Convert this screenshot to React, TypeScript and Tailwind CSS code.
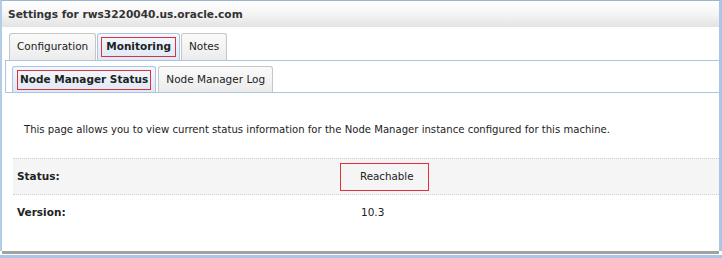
export default function App() {
  return (
    <div className="w-[722px] h-[258px] bg-white overflow-hidden flex flex-col text-[#222] font-['DejaVu_Sans',Verdana,sans-serif]">
      <div className="flex-1 flex flex-col border-t border-[#9db6d0] border-l-2 border-l-[#b3cde6] border-r-[3px] border-r-[#a7c7e7] min-h-0">
        {/* Header */}
        <div className="h-[26px] flex items-center pl-[6px] border-t border-white bg-gradient-to-b from-white via-[#f4f4f4] to-[#e3e3e3] text-[10.6px] font-bold text-[#333]">
          Settings for rws3220040.us.oracle.com
        </div>

        {/* Main tabs */}
        <div className="mt-[6px] flex items-end pl-[7px] gap-[1px] h-[27px]">
          <div className="h-[27px] px-[7px] flex items-center rounded-t-[3px] border border-b-0 border-[#c6c6c6] bg-gradient-to-b from-[#fafafa] to-[#ececec] text-[10.5px]">
            Configuration
          </div>
          <div className="h-[27px] px-[3px] flex items-center rounded-t-[3px] border border-b-0 border-[#a9c5e2] bg-gradient-to-b from-[#f3f8fd] to-[#dde9f5]">
            <span className="h-[20px] px-[4px] flex items-center border border-[#e0303c] text-[10.5px] font-bold">Monitoring</span>
          </div>
          <div className="h-[27px] px-[7px] flex items-center rounded-t-[3px] border border-b-0 border-[#c6c6c6] bg-gradient-to-b from-[#fafafa] to-[#ececec] text-[10.5px]">
            Notes
          </div>
        </div>

        {/* Sub tabs */}
        <div className="ml-[3px] h-[33px] border-t border-l border-b border-[#a9c5e2] flex items-end pl-[6px] gap-[2px]">
          <div className="h-[26px] px-[4px] flex items-center rounded-t-[3px] border border-b-0 border-[#a9c5e2] bg-gradient-to-b from-[#f3f8fd] to-[#dde9f5]">
            <span className="h-[20px] px-[2px] flex items-center border border-[#e0303c] text-[10.5px] font-bold">Node Manager Status</span>
          </div>
          <div className="h-[26px] px-[7px] flex items-center rounded-t-[3px] border border-b-0 border-[#c6c6c6] bg-gradient-to-b from-[#fafafa] to-[#ececec] text-[10.5px]">
            Node Manager Log
          </div>
        </div>

        {/* Content */}
        <div className="flex-1 flex flex-col pl-[11px]">
          <p className="mt-[30px] ml-[11px] text-[10.1px] leading-[14px]">
            This page allows you to view current status information for the Node Manager instance configured for this machine.
          </p>
          <div className="mt-[21px] h-[37px] flex items-center bg-[#f5f5f5] border-t border-b border-dotted border-[#cfcfcf]">
            <span className="w-[327px] pl-[4px] text-[10.5px] font-bold">Status:</span>
            <span className="h-[28px] w-[89px] pl-[19px] flex items-center border border-[#e0303c] text-[10.3px]">Reachable</span>
          </div>
          <div className="h-[36px] flex items-center">
            <span className="w-[348px] pl-[4px] text-[10.5px] font-bold">Version:</span>
            <span className="text-[10.5px]">10.3</span>
          </div>
        </div>
      </div>
      <div className="h-[3px] bg-[#a2a2a2] ml-[2px] mr-[3px]" />
      <div className="h-[1px] bg-white" />
      <div className="h-[3px] bg-[#a7c7e7]" />
    </div>
  );
}
